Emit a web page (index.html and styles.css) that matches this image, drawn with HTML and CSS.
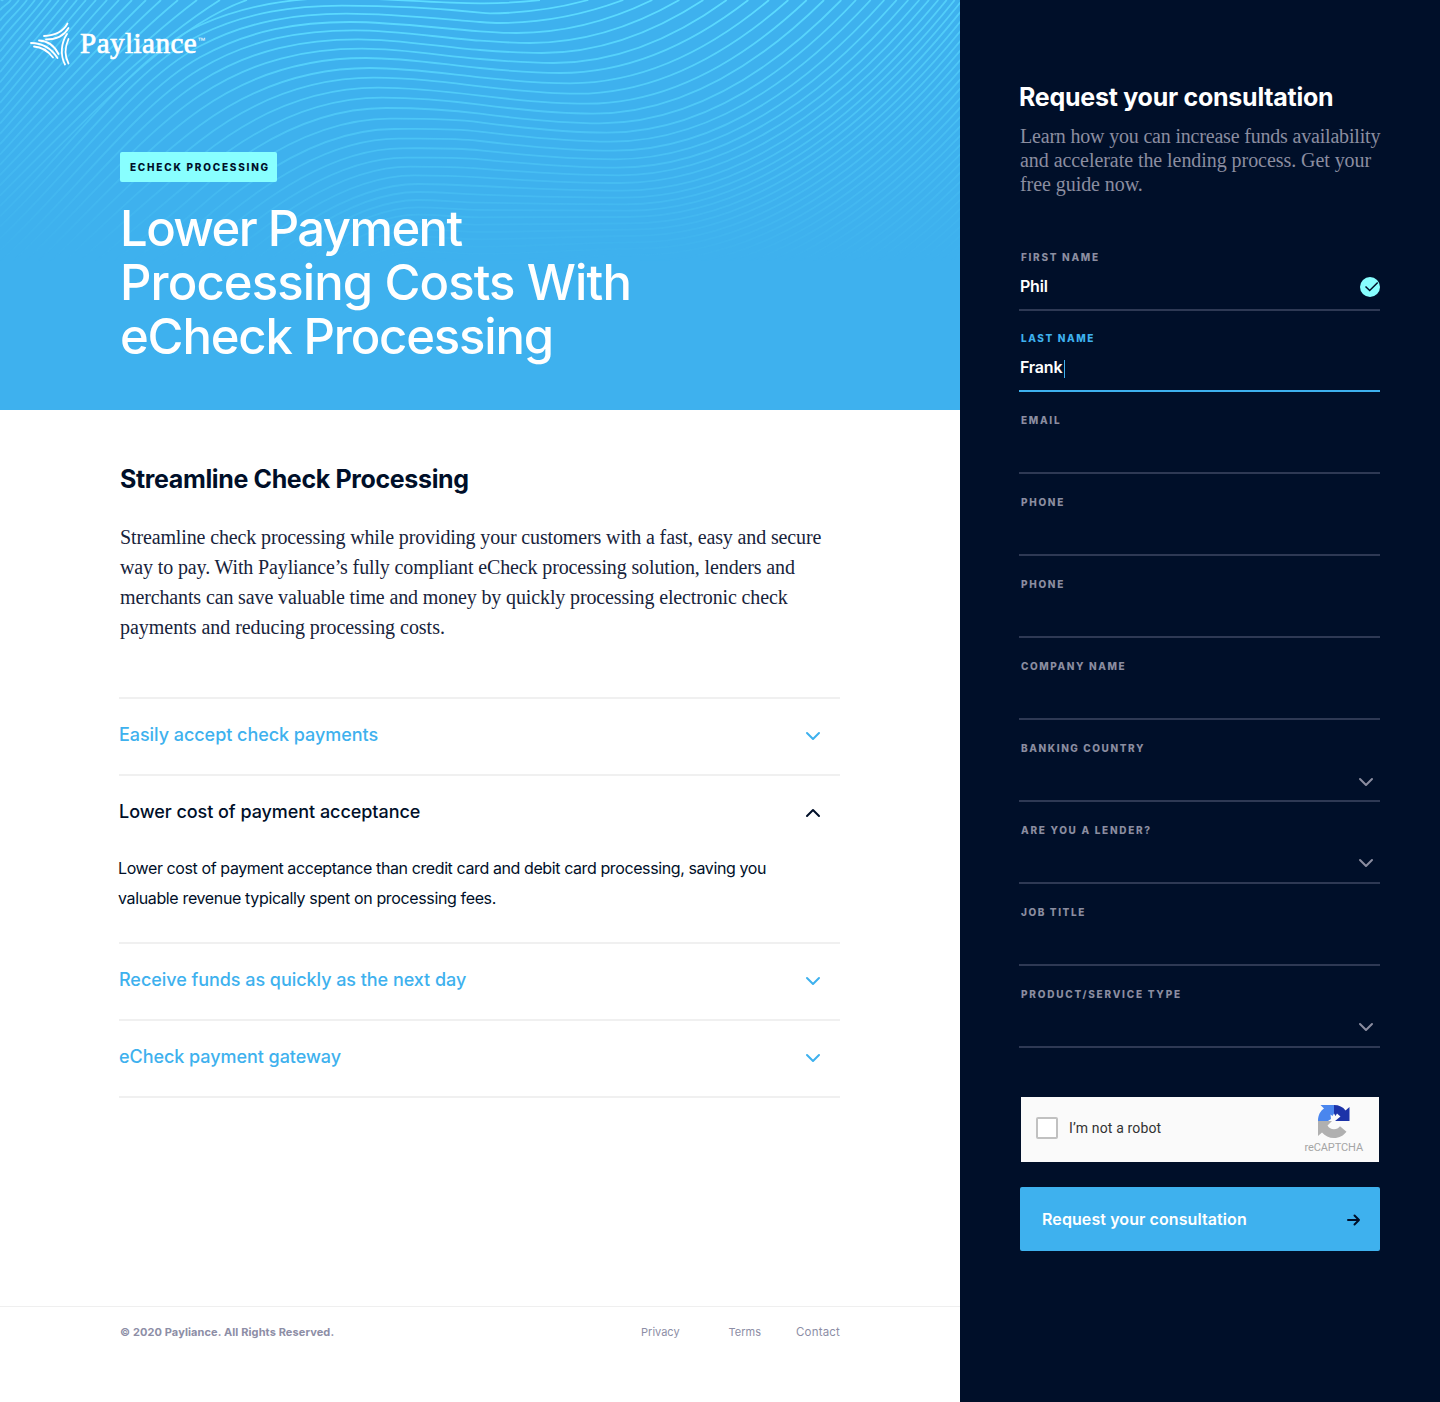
FILE: index.html
```
<!DOCTYPE html>
<html lang="en">
<head>
<meta charset="utf-8">
<title>Payliance – eCheck Processing</title>
<link rel="stylesheet" href="styles.css">
</head>
<body>
<div class="page">
  <div class="content">
    <header class="hero">
      <svg class="waves" viewBox="0 0 960 410" aria-hidden="true">
        <defs>
          <linearGradient id="fade" x1="0" y1="0" x2="0" y2="262" gradientUnits="userSpaceOnUse">
            <stop offset="0" stop-color="#fff"/><stop offset=".5" stop-color="#fff" stop-opacity=".45"/><stop offset="1" stop-color="#fff" stop-opacity="0"/>
          </linearGradient>
          <linearGradient id="line" x1="0" y1="0" x2="960" y2="0" gradientUnits="userSpaceOnUse">
            <stop offset="0" stop-color="#5cdcff" stop-opacity=".6"/><stop offset=".3" stop-color="#5cdcff"/><stop offset=".8" stop-color="#5cdcff"/><stop offset="1" stop-color="#5cdcff" stop-opacity=".7"/>
          </linearGradient>
          <mask id="fade-mask" maskUnits="userSpaceOnUse" x="0" y="0" width="960" height="410"><rect width="960" height="410" fill="url(#fade)"/></mask>
        </defs>
        <g id="wave-lines" mask="url(#fade-mask)"></g>
      </svg>
      <a class="logo">
        <svg class="logo-mark" viewBox="0 0 40 46" aria-hidden="true">
          <path d="M37.500 1.500C33 10 25 13.500 14 14"/><path d="M38.500 6C34 14 27 17.500 16 17.500"/>
          <path d="M1 21C13 21 21 26 27.500 36"/><path d="M4 24.500C13 25 18 29 23 35.500"/><path d="M9 18.500C19 19 25 25 28.500 32"/>
          <path d="M37 12C31 21 30 33 35 42.500"/><path d="M38.500 17C34.500 26 34.500 34 38.500 41.500"/>
        </svg>
        <span class="logo-name">Payliance</span><span class="logo-tm">™</span>
      </a>
      <div class="hero-text">
        <span class="badge">ECHECK PROCESSING</span>
        <h1><span class="h1-a">Lower Payment</span><br><span class="h1-b">Processing Costs With</span><br><span class="h1-c">eCheck Processing</span></h1>
      </div>
    </header>
    <main class="main">
      <h2>Streamline Check Processing</h2>
      <p class="intro">Streamline check processing while providing your customers with a fast, easy and secure<br>way to pay. With Payliance’s fully compliant eCheck processing solution, lenders and<br>merchants can save valuable time and money by quickly processing electronic check<br><span class="intro-last">payments and reducing processing costs.</span></p>
      <div class="accordion">
        <section class="item"><div class="item-head"><span>Easily accept check payments</span><svg class="chev" viewBox="0 0 16 10"><path d="M2 2l6 6 6-6"/></svg></div></section>
        <section class="item open"><div class="item-head"><span>Lower cost of payment acceptance</span><svg class="chev" viewBox="0 0 16 10"><path d="M2 8l6-6 6 6"/></svg></div>
          <p class="item-body">Lower cost of payment acceptance than credit card and debit card processing, saving you<br><span class="item-body-last">valuable revenue typically spent on processing fees.</span></p></section>
        <section class="item"><div class="item-head"><span>Receive funds as quickly as the next day</span><svg class="chev" viewBox="0 0 16 10"><path d="M2 2l6 6 6-6"/></svg></div></section>
        <section class="item"><div class="item-head"><span>eCheck payment gateway</span><svg class="chev" viewBox="0 0 16 10"><path d="M2 2l6 6 6-6"/></svg></div></section>
      </div>
    </main>
    <footer class="footer">
      <span class="copy">© 2020 Payliance. All Rights Reserved.</span>
      <nav class="links"><a>Privacy</a><a class="terms">Terms</a><a class="contact">Contact</a></nav>
    </footer>
  </div>
  <aside class="side">
    <h3>Request your consultation</h3>
    <p class="lead"><span class="lead-first">Learn how you can increase funds availability</span><br>and accelerate the lending process. Get your<br>free guide now.</p>
    <form class="form">
      <div class="field first"><label>FIRST NAME</label><div class="value"><span>Phil</span><svg class="check" viewBox="0 0 20 20"><circle cx="10" cy="10" r="10"/><path d="M5.500 9.500l4.200 4 8-8"/></svg></div></div>
      <div class="field active"><label>LAST NAME</label><div class="value"><span>Frank</span><i class="caret"></i></div></div>
      <div class="field"><label>EMAIL</label></div>
      <div class="field"><label>PHONE</label></div>
      <div class="field"><label>PHONE</label></div>
      <div class="field"><label class="tight">COMPANY NAME</label></div>
      <div class="field"><label class="tight">BANKING COUNTRY</label><svg class="chev low" viewBox="0 0 16 10"><path d="M2 2l6 6 6-6"/></svg></div>
      <div class="field"><label>ARE YOU A LENDER?</label><svg class="chev" viewBox="0 0 16 10"><path d="M2 2l6 6 6-6"/></svg></div>
      <div class="field"><label class="tight">JOB TITLE</label></div>
      <div class="field"><label class="wide">PRODUCT/SERVICE TYPE</label><svg class="chev" viewBox="0 0 16 10"><path d="M2 2l6 6 6-6"/></svg></div>
      <div class="captcha"><span class="box"></span><span class="robot">I’m not a robot</span>
        <div class="brand">
          <svg viewBox="0 0 34 34"><path fill="#4a86ee" d="M17 1v8.500l-1.500 2.500-2-1.500.5 4.500-3 2H1C1 11 3.500 7 7 4.600L3.500 1z"/><path fill="#1c33a8" d="M17 1c5 0 9 2 11.500 5.400L32.500 3v14H18l5.500-4.500-3.500-3-1.500 2.500L17 9.500z"/><path fill="#b0b0b0" d="M1 17h14l-4.500 4.500c1.500 2.600 3.700 3.700 6.500 3.700 2.600 0 4.500-1 6-3l6.500 5.500C26.500 31.500 22.500 34 17 34c-5 0-9-2-12-5.500L1 32z"/></svg>
          <span>reCAPTCHA</span>
        </div>
      </div>
      <button class="submit" type="button"><span>Request your consultation</span><svg viewBox="0 0 14 12"><path d="M1 6h11M7.500 1.500L12 6l-4.500 4.500"/></svg></button>
    </form>
  </aside>
</div>
<script src="waves.js"></script>
</body>
</html>
```
FILE: styles.css
```
*{box-sizing:border-box}
body{margin:0;background:#fff;color:#000f29;font-family:Inter,"Liberation Sans",sans-serif}
h1,h2,h3,p{margin:0}
.page{display:flex;width:1440px;height:1402px;white-space:nowrap}
.content{width:960px;display:flex;flex-direction:column}

/* Hero */
.hero{position:relative;height:410px;background:#3eb1ee;color:#fff;padding:20px 30px 0;overflow:hidden}
.waves{position:absolute;inset:0;width:960px;height:410px}
.waves path{fill:none;stroke:url(#line);stroke-width:1.8}
.logo{position:relative;display:flex;height:48px;align-items:flex-start}
.logo-mark{width:40px;height:46px;margin-top:2px;fill:none;stroke:#fff;stroke-width:1.8;stroke-linecap:round}
.logo-name{font:29px/46px "Liberation Serif",serif;letter-spacing:.5px;margin-left:10px;-webkit-text-stroke:.7px #fff}
.logo-tm{font:8px/42px "Liberation Sans",sans-serif}
.hero-text{position:relative;padding:84px 0 0 90px}
.badge{display:block;width:157px;height:30px;border-radius:2px;background:#8ff;color:#000f29;font-size:10px;font-weight:800;line-height:30px;padding-left:10px;letter-spacing:1.77px}
h1{margin-top:20px;font-size:49px;font-weight:500;line-height:54px}
.h1-a{letter-spacing:-1.57px}
.h1-b{letter-spacing:-.88px}
.h1-c{letter-spacing:-1.17px}

/* Main column */
.main{flex:1;padding:53px 120px 0 119px}
h2{font-size:25px;font-weight:700;line-height:32px;padding-left:1px;letter-spacing:-.36px}
.intro{margin-top:27px;font:20px/30px "Liberation Serif",serif;padding-left:1px;letter-spacing:-.13px;color:#17233b}
.intro-last{letter-spacing:-.03px}
.accordion{margin-top:55px;border-bottom:2px solid #f0f0f0}
.item{border-top:2px solid #f0f0f0}
.item-head{display:flex;justify-content:space-between;align-items:center;height:75px;padding:0 19px 2px 0;color:#3eb1ee;font-size:18px;font-weight:500;letter-spacing:-.05px}
.item-head span{position:relative;top:-1px}
.open .item-head{color:#000f29}
.chev{width:16px;height:10px;fill:none;stroke:currentColor;stroke-width:2;stroke-linecap:round;stroke-linejoin:round}
.item-body{margin:2px 0 29px -1px;font-size:16px;line-height:30px;letter-spacing:-.4px}
.item-body-last{letter-spacing:-.36px}

/* Footer */
.footer{height:96px;border-top:1px solid #efefef;padding:17px 120px 0;display:flex;justify-content:space-between;color:#8d8ea6;font-size:11px;line-height:16px}
.copy{font-weight:700;letter-spacing:.11px}
.links{display:flex}
.terms{margin-left:49px}
.contact{margin-left:35px;font-size:11.500px;letter-spacing:.18px}

/* Request form */
.side{width:480px;background:#000f29;padding:81px 60px 0 59px;color:#fff}
h3{font-size:25px;font-weight:700;line-height:32px;letter-spacing:-.26px}
.lead{margin-top:11px;padding-left:1px;color:#8b8da0;font:20px/24px "Liberation Serif",serif;letter-spacing:-.06px}
.lead-first{letter-spacing:-.19px}
.form{margin-top:33px}
.field{height:82px;padding:22px 0 0 2px;border-bottom:2px solid #2e3954;color:#8b8da0}
.field label{display:block;font-size:10px;font-weight:800;line-height:12px;letter-spacing:1.7px}
.field label.tight{letter-spacing:1.58px}
.field label.wide{letter-spacing:1.77px}
.field.active{height:81px;padding-top:21px;border-color:#3eb1ee;color:#3eb1ee}
.field.active label{letter-spacing:1.6px}
.value{display:flex;align-items:center;height:24px;margin:11px 0 0 -1px;color:#fff;font-size:16px;font-weight:600;letter-spacing:-.2px}
.check{width:20px;height:20px;margin:2px 0 0 auto;fill:#8ff}
.check path{fill:none;stroke:#000f29;stroke-width:1.5}
.caret{width:1px;height:18px;background:#3eb1ee;margin:3px 0 0 2px}
.field>.chev{display:block;margin:22px 6px 0 auto}
.field>.chev.low{margin-top:23px}
.captcha{display:flex;align-items:center;width:358px;height:65px;margin:49px 0 0 2px;background:#fafafa;padding:0 16px 0 15px;color:#333}
.box{width:22px;height:22px;border:2px solid #c1c1c1;border-radius:2px;background:#fff;margin-bottom:3px}
.robot{margin:0 0 3px 11px;font:14px/20px Roboto,sans-serif;letter-spacing:.15px}
.brand{margin-left:auto;display:flex;flex-direction:column;align-items:center;gap:3px;color:#a5a5a5;font:11px/14px Roboto,sans-serif;letter-spacing:-.1px}
.brand svg{width:34px;height:34px}
.submit{display:flex;align-items:center;justify-content:space-between;width:360px;height:64px;margin:25px 0 0 1px;padding:0 19px 0 22px;border:0;border-radius:2px;background:#3eb1ee;color:#fff;font:600 16px/20px Inter,sans-serif;letter-spacing:.09px}
.submit svg{width:14px;height:12px;margin-top:1px;fill:none;stroke:#000f29;stroke-width:2;stroke-linecap:round;stroke-linejoin:round}
```
FILE: waves.js
```
// Contour lines behind the hero: each one climbs from the left edge to a crest,
// dips into a trough and leaves through the top edge.
const third = n => n / 3;
const at200 = [76,105,138,172,207,245,286,329,376,422,470,520,570,620,668,714,758,800,840,880,918,955,990,1024].map(third);
const crest = [-6,17,41,66,91,118,146,174,204,233,263,293,324,356,387,416,445,473,500,526,552,576,600,622].map(third);
const at480 = [10,38,66,94,122,150,177,204,232,259,287,314,341,367,395,423,451,478,506,532,558,584,608,630].map(third);
const trough = [10,40,69,99,129,159,189,219,250,281,311,341,370,398,425,452,478,503,526,549,572,593,613,632].map(third);
const troughX = [5,30,60,110,150,185,220,240,270,290,320,340,360,380,390,400,405,410,415,420,425,430,435,440].map(n => 480 + n / 3);
const exitX = [180,325,430,517,598,670,740,805,867,925,980,1032,1084,1128,1172,1213,1250,1285,1318,1347,1375,1400,1424,1447].map(n => 480 + n / 3);
const topX = [247,220,197,178,161,146,132,119,107,96,86,77,68,59,51,43,35,27,19,11,3];
const pick = (a, k) => k < a.length ? a[k] : a[a.length - 1] + (k - a.length + 1) * (a[a.length - 1] - a[a.length - 2]);

function spline(points) {
  let d = `M${points[0][0]} ${points[0][1].toFixed(1)}`;
  for (let i = 1; i < points.length; i++) {
    const [x0, y0, s0] = points[i - 1], [x1, y1, s1] = points[i], h = (x1 - x0) / 3;
    d += `C${(x0 + h).toFixed(1)} ${(y0 + s0 * h).toFixed(1)} ${(x1 - h).toFixed(1)} ${(y1 - s1 * h).toFixed(1)} ${x1.toFixed(1)} ${y1.toFixed(1)}`;
  }
  return d;
}
const leftY = k => (k + 21) * 10.3 + (k > 1 ? (k - 1) * 1.4 : 0);
const leftSlope = y => -(1.4 - 0.4 * Math.min(y, 260) / 200);
const lines = [];
topX.forEach((x, i) => {
  const y = leftY(-1 - i);
  lines.push([[0, y, leftSlope(y)], [x, 0, -(0.35 + 1.05 * Math.pow((247 - x) / 247, 0.6))]]);
});
for (let k = 0; k < 58; k++) {
  const y = leftY(k), tx = Math.max(pick(troughX, k), 484), ty = pick(trough, k), ex = pick(exitX, k);
  const crestX = 338 + Math.min(k, 20) * 4, d = pick(at480, k);
  const dip = Math.max(0, Math.min(0.13, (ty - d) / (tx - 480) * 1.6));
  lines.push([[0, y, leftSlope(y)], [200, pick(at200, k), -(0.45 + Math.min(k, 12) * 0.036)],
    [crestX, pick(crest, k), 0], [480, d, dip], [tx, ty, 0], [ex, 0, -2 * ty / (ex - tx)]]);
}
document.getElementById('wave-lines').innerHTML = lines.map(p => `<path d="${spline(p)}"/>`).join('');
```
